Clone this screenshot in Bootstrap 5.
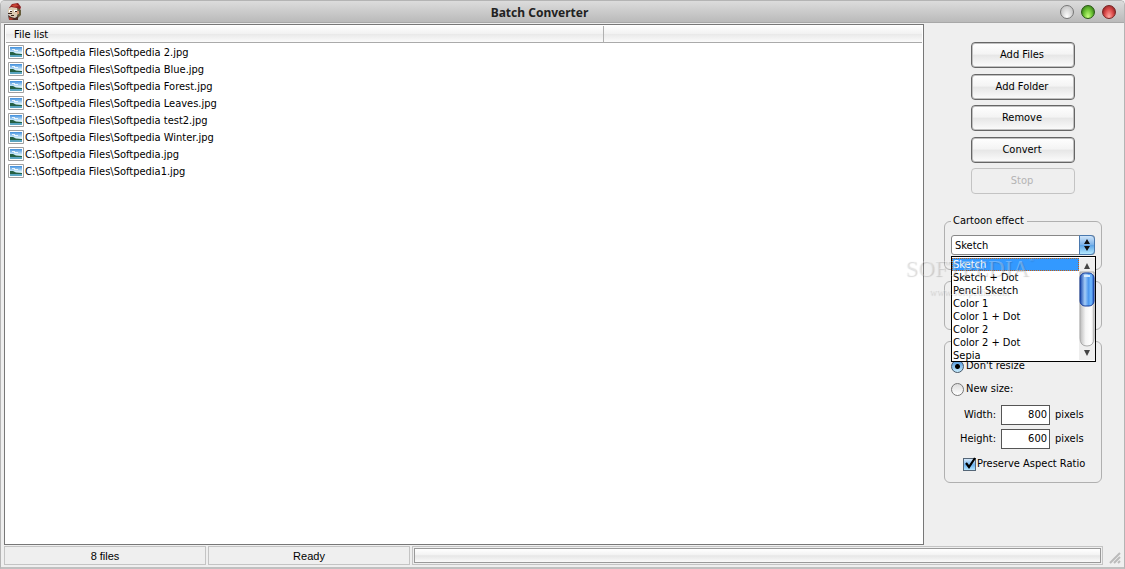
<!DOCTYPE html>
<html lang="en">
<head>
<meta charset="utf-8">
<meta name="viewport" content="width=device-width, initial-scale=1">
<title>Batch Converter</title>
<link href="https://cdn.jsdelivr.net/npm/bootstrap@5.3.0/dist/css/bootstrap.min.css" rel="stylesheet">
<style>
body{font:11px/14px "DejaVu Sans Condensed","Noto Sans",sans-serif;color:#000;background:#efefef}
.window{border:1px solid #b4b4b4;border-bottom:2px solid #c0c0c0;overflow:hidden;border-radius:5px 5px 0 0}
html{background:#e4e4e4}
.titlebar{height:22px;background:linear-gradient(#dcdcdc,#bababa);border-bottom:1px solid #a8a8a8;display:grid;grid-template-columns:16px 1fr 60px;padding:0 8px 0 6px}
.titlebar h1{font:bold 12px/20px "Noto Sans","Open Sans",sans-serif;color:#222;text-align:center;padding-top:2px}
.orb{width:14px;height:14px;border-radius:50%;padding:0;border:1px solid #777;background:radial-gradient(ellipse at 50% 90%,#fff,#d2d2d2 60%,#bbb)}
.orb.max{border-color:#275813;background:radial-gradient(ellipse at 50% 90%,#c8ff80,#6cc334 50%,#235b12)}
.orb.shut{border-color:#722;background:radial-gradient(ellipse at 50% 90%,#ffaaa2,#dd4c4c 50%,#701515)}
.filebox{border:1px solid #777;background:#fff;margin:1px 0 0 3px;padding:1px}
.filebox table{table-layout:fixed;width:100%;border-collapse:separate;border-spacing:0}
.filebox th{font-weight:400;height:17px;padding:2px 8px 0;background:linear-gradient(#fdfdfd,#f1f1f1 50%,#e9e9e9 52%,#fbfbfb);border-bottom:1px solid #aaa;border-right:1px solid #b0b0b0}
.filebox th:last-child{border-right:0}
.filebox td{height:17px;padding:0 0 0 2px;white-space:nowrap}
.filebox td svg{display:block;margin-right:1px}
.filebox td span{padding-top:2px}
.side{width:200px;padding:19px 2px 0 0}
.actions{width:104px;height:152px}
.push{height:26px;padding:0 2px 0 0;border:1px solid #666;border-radius:4px;box-shadow:inset 0 0 0 1px #c0c0c0;background:linear-gradient(#fff,#f4f4f4 45%,#e7e7e7 52%,#fcfcfc);color:#000;font:inherit}
.push:disabled{color:#b4b4b4;border-color:#c3c3c3;box-shadow:none;background:#efefef}
.groups{width:158px;padding-top:20px}
.frame{border:1px solid #b0b0b0;border-radius:6px;margin-bottom:11px;padding:0 6px}
.frame legend{float:none;width:auto;font:inherit;margin:0;padding:0 3px 0 2px}
.effect{height:56px}
.spare{height:49px}
.resize{height:142px;padding-top:17px}
.combo{position:relative;margin-top:7px}
.combo select{width:100%;height:20px;border:1px solid #888;border-radius:3px;background:#fff;appearance:none;font:inherit;padding:2px 18px 0 3px;color:#000;display:block}
.stepper{position:absolute;right:0;top:0}
.popup{position:absolute;top:21px;left:0;right:-1px;height:106px;border:1px solid #000;background:#fff;z-index:2;overflow:hidden;padding:1px 0}
.popup li{height:13px;line-height:13px;padding-left:1px;white-space:nowrap}
.popup li.picked{background:#3399ff;color:#fff;outline:1px dotted #c86010;outline-offset:-1px}
.tick{appearance:none;width:13px;height:13px;margin:0;border:1px solid #777;background:#fff}
.tick[type=radio]{border-radius:50%;background:linear-gradient(#ddd,#fff)}
.tick[type=radio]:checked{border-color:#456;background:radial-gradient(circle,#000 0 2px,transparent 3px),linear-gradient(#4d94dc,#c8eeff)}
.tick[type=checkbox]{background:linear-gradient(#d7e9fa,#6eb4f2 55%,#b5e6ff);border-color:#567}
.check{gap:1px}
.check svg{position:absolute;left:0;top:-2px;pointer-events:none}
.opt{height:14px;gap:2px}
.opt + .opt{margin:9px 0}
.size-row{height:20px;gap:5px}
.size-row label{width:45px;text-align:right}
.size-row input{width:49px;height:20px;border:1px solid #555;padding:0 2px 1px;text-align:right;font:inherit;background:#fff;color:#000}
.status{height:21px;padding:1px 2px 1px 3px;gap:2px;font:11px/18px "Liberation Sans",sans-serif;margin-bottom:1px}
.cell{width:202px;border:1px solid #c4c4c4;text-align:center}
.cell.meter{padding:1px}
.bar{height:100%;border:1px solid #999;background:linear-gradient(#fff,#f3f3f3 45%,#e6e6e6 52%,#fafafa)}
.stamp{position:absolute;top:255px;right:87px;width:132px;z-index:3;color:rgba(255,255,255,.3);text-shadow:1px 1px 1px rgba(0,0,0,.16);font:23px/26px "Liberation Serif",serif;pointer-events:none;white-space:nowrap}
.stamp small{display:block;font-size:10px;line-height:20px;padding-left:24px}
.stamp sup{font-size:6px;top:-14px}
</style>
</head>
<body>
<div class="window vh-100 d-flex flex-column position-relative">
  <svg width="0" height="0" class="position-absolute" aria-hidden="true">
    <defs>
      <linearGradient id="sky" x2="0" y2="1"><stop stop-color="#3f8edc"/><stop offset=".6" stop-color="#dff6ff"/></linearGradient>
      <linearGradient id="blue" x2="0" y2="1"><stop stop-color="#d4e7fa"/><stop offset=".48" stop-color="#7eb4ea"/><stop offset=".5" stop-color="#5ba2e6"/><stop offset="1" stop-color="#b8ecff"/></linearGradient>
      <linearGradient id="thumb"><stop stop-color="#1746ac"/><stop offset=".35" stop-color="#a5cdf8"/><stop offset=".6" stop-color="#4d98ef"/><stop offset=".8" stop-color="#70baff"/><stop offset="1" stop-color="#1c4fb8"/></linearGradient>
      <linearGradient id="track"><stop stop-color="#bbb"/><stop offset=".4" stop-color="#f5f5f5"/><stop offset=".8" stop-color="#fff"/><stop offset="1" stop-color="#ccc"/></linearGradient>
      <symbol id="photo" viewBox="0 0 16 14"><path d="M.5.5h15v13H.5z" fill="#fff" stroke="#a0a0a0"/><path d="M2 2h12v10H2z" fill="url(#sky)"/><path d="M4 4h3v1h3v1H6V5H4z" fill="#fff" opacity=".8"/><path d="M2 7l3 0 3 1.500 6 .5v1H2z" fill="#246044"/><path d="M2 10h12v2H2z" fill="#5aa5c0"/></symbol>
    </defs>
  </svg>
  <header class="titlebar align-items-center">
    <svg width="16" height="18" viewBox="0 0 16 18" aria-hidden="true">
      <path d="M2 5L5 1l6-1 3 4-1 3H4z" fill="#8c1f20"/><path d="M4 2l5-1 3 2-5 1z" fill="#c94334"/>
      <path d="M10 5l4 2v5l-3 3-2-5z" fill="#655c3c"/><path d="M1 6l3-2 6 1 1 6-4 4-4-2-2-4z" fill="#ddcbb2"/>
      <path d="M2 7h3v2H2zM7 7h3v2H7z" fill="#fff"/><path d="M3 8h2v1H3zM8 8h2v1H8zM1 10h4v1H1zM4 12h3v1H4z" fill="#3b2721"/>
      <path d="M1 12l3 2 4 1 3-2v4H2z" fill="#4b2b24"/><path d="M2 14l5 2-3 1H2z" fill="#a53a2c"/><path d="M10 8h2v3h-2z" fill="#d89776"/>
    </svg>
    <h1 class="m-0">Batch Converter</h1>
    <div class="d-flex justify-content-between ps-1">
      <button class="orb" aria-label="Minimize"></button><button class="orb max" aria-label="Maximize"></button><button class="orb shut" aria-label="Close"></button>
    </div>
  </header>
  <main class="d-flex flex-grow-1">
    <section class="filebox flex-grow-1">
      <table>
        <colgroup><col style="width:65.300%"><col></colgroup>
        <thead><tr><th scope="col">File list</th><th></th></tr></thead>
        <tbody>
          <tr><td><div class="d-flex align-items-center"><svg width="16" height="14"><use href="#photo"/></svg><span>C:\Softpedia Files\Softpedia 2.jpg</span></div></td><td></td></tr>
          <tr><td><div class="d-flex align-items-center"><svg width="16" height="14"><use href="#photo"/></svg><span>C:\Softpedia Files\Softpedia Blue.jpg</span></div></td><td></td></tr>
          <tr><td><div class="d-flex align-items-center"><svg width="16" height="14"><use href="#photo"/></svg><span>C:\Softpedia Files\Softpedia Forest.jpg</span></div></td><td></td></tr>
          <tr><td><div class="d-flex align-items-center"><svg width="16" height="14"><use href="#photo"/></svg><span>C:\Softpedia Files\Softpedia Leaves.jpg</span></div></td><td></td></tr>
          <tr><td><div class="d-flex align-items-center"><svg width="16" height="14"><use href="#photo"/></svg><span>C:\Softpedia Files\Softpedia test2.jpg</span></div></td><td></td></tr>
          <tr><td><div class="d-flex align-items-center"><svg width="16" height="14"><use href="#photo"/></svg><span>C:\Softpedia Files\Softpedia Winter.jpg</span></div></td><td></td></tr>
          <tr><td><div class="d-flex align-items-center"><svg width="16" height="14"><use href="#photo"/></svg><span>C:\Softpedia Files\Softpedia.jpg</span></div></td><td></td></tr>
          <tr><td><div class="d-flex align-items-center"><svg width="16" height="14"><use href="#photo"/></svg><span>C:\Softpedia Files\Softpedia1.jpg</span></div></td><td></td></tr>
        </tbody>
      </table>
    </section>
    <aside class="side flex-shrink-0 d-flex flex-column align-items-center">
      <div class="actions d-flex flex-column justify-content-between">
        <button class="push">Add Files</button>
        <button class="push">Add Folder</button>
        <button class="push">Remove</button>
        <button class="push">Convert</button>
        <button class="push" disabled>Stop</button>
      </div>
      <form class="groups">
        <fieldset class="frame effect">
          <legend><label for="effect">Cartoon effect</label></legend>
          <div class="combo">
            <select id="effect"><option>Sketch</option></select>
            <svg class="stepper" width="16" height="20" aria-hidden="true"><path d="M.5.500H12q3.500 0 3.500 3.500V16q0 3.500-3.500 3.500H.5z" fill="url(#blue)" stroke="#4a78ad"/><path d="M8 4l3 5H5zM8 16l3-5H5z" fill="#111"/></svg>
            <div class="popup d-flex">
              <ul class="list-unstyled flex-grow-1 mb-0" role="listbox" aria-label="Cartoon effect">
                <li class="picked" role="option" aria-selected="true">Sketch</li>
                <li role="option">Sketch + Dot</li>
                <li role="option">Pencil Sketch</li>
                <li role="option">Color 1</li>
                <li role="option">Color 1 + Dot</li>
                <li role="option">Color 2</li>
                <li role="option">Color 2 + Dot</li>
                <li role="option">Sepia</li>
              </ul>
              <svg width="16" height="102" class="flex-shrink-0" aria-hidden="true"><path d="M0 0h16v102H0z" fill="#eee"/><path d="M1 14h14v66q0 8-7 8t-7-8z" fill="url(#track)" stroke="#aaa"/><rect x="1" y="15" width="14" height="33" rx="5" fill="url(#thumb)" stroke="#173f9c"/><path d="M5 17q3-1 6 0v2H5z" fill="#d8ecff"/><path d="M8 5l3 6H5zM8 98l3-6H5z" fill="#444"/></svg>
            </div>
          </div>
        </fieldset>
        <fieldset class="frame spare"></fieldset>
        <fieldset class="frame resize mb-0">
          <div class="opt d-flex align-items-center"><input class="tick" type="radio" name="mode" id="keep" checked><label for="keep">Don't resize</label></div>
          <div class="opt d-flex align-items-center"><input class="tick" type="radio" name="mode" id="fresh"><label for="fresh">New size:</label></div>
          <div class="size-row d-flex align-items-center mb-1"><label for="w">Width:</label><input id="w" type="text" value="800"><span>pixels</span></div>
          <div class="size-row d-flex align-items-center mb-2"><label for="h">Height:</label><input id="h" type="text" value="600"><span>pixels</span></div>
          <div class="check d-flex align-items-center ms-2 ps-1"><span class="position-relative d-flex"><input class="tick" type="checkbox" id="ratio" checked><svg width="15" height="14" aria-hidden="true"><path d="M3 7l3 4 6-9" fill="none" stroke="#000" stroke-width="2.200"/></svg></span><label for="ratio" class="text-nowrap">Preserve Aspect Ratio</label></div>
        </fieldset>
      </form>
    </aside>
  </main>
  <footer class="status d-flex">
    <div class="cell">8 files</div>
    <div class="cell">Ready</div>
    <div class="cell meter flex-grow-1"><div class="bar"></div></div>
    <svg width="17" height="19" aria-hidden="true"><path d="M5 17L15 7M9 17l6-6M13 17l2-2" stroke="#bbb" stroke-width="2"/></svg>
  </footer>
  <div class="stamp" aria-hidden="true">SOFTPEDIA<sup>®</sup><small>www.softpedia.com</small></div>
</div>
<script src="https://cdn.jsdelivr.net/npm/bootstrap@5.3.0/dist/js/bootstrap.bundle.min.js"></script>
</body>
</html>
